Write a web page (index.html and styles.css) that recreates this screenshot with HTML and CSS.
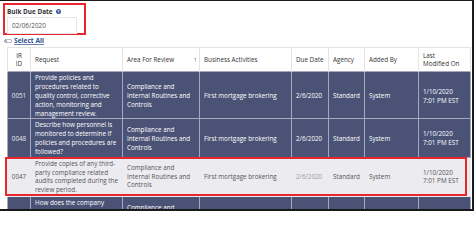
FILE: index.html
```html
<!DOCTYPE html>
<html>
<head>
<meta charset="utf-8">
<link rel="stylesheet" href="styles.css">
</head>
<body>
<div class="frame">
  <div class="bulk">
    <div class="bulk-label">Bulk Due Date
      <svg class="help" viewBox="0 0 10 10" width="5" height="5"><circle cx="5" cy="5" r="5" fill="#3d5a94"/><text x="5" y="8.2" font-size="8" font-weight="700" text-anchor="middle" fill="#fff" font-family="Open Sans, sans-serif">?</text></svg>
    </div>
    <div class="date-input">02/06/2020</div>
  </div>
  <div class="select-all">
    <svg class="toggle" viewBox="0 0 16 8" width="8" height="4"><rect x="0.75" y="0.75" width="14.5" height="6.5" rx="3.25" fill="none" stroke="#7a8aa8" stroke-width="1.3"/><circle cx="4" cy="4" r="1.8" fill="#7a8aa8"/></svg>
    <span class="select-link">Select All</span>
  </div>
  <div class="table-wrap">
    <table class="grid">
      <colgroup>
        <col class="c-id"><col class="c-req"><col class="c-area"><col class="c-biz"><col class="c-due"><col class="c-agency"><col class="c-added"><col class="c-mod">
      </colgroup>
      <thead>
        <tr>
          <th class="center">IR<br>ID</th>
          <th>Request</th>
          <th><div class="sort-head"><span>Area For Review</span><span class="sort">&#8593;</span></div></th>
          <th>Business Activities</th>
          <th>Due Date</th>
          <th>Agency</th>
          <th>Added By</th>
          <th>Last<br>Modified On</th>
        </tr>
      </thead>
      <tbody>
        <tr class="dark">
          <td class="center">0051</td>
          <td>Provide policies and procedures related to quality control, corrective action, monitoring and management review.</td>
          <td>Compliance and Internal Routines and Controls</td>
          <td>First mortgage brokering</td>
          <td>2/6/2020</td>
          <td>Standard</td>
          <td>System</td>
          <td>1/10/2020<br>7:01 PM EST</td>
        </tr>
        <tr class="dark roomy">
          <td class="center">0048</td>
          <td>Describe how personnel is monitored to determine if policies and procedures are followed?</td>
          <td>Compliance and Internal Routines and Controls</td>
          <td>First mortgage brokering</td>
          <td>2/6/2020</td>
          <td>Standard</td>
          <td>System</td>
          <td>1/10/2020<br>7:01 PM EST</td>
        </tr>
        <tr class="light">
          <td class="center">0047</td>
          <td>Provide copies of any third-party compliance related audits completed during the review period.</td>
          <td>Compliance and Internal Routines and Controls</td>
          <td>First mortgage brokering</td>
          <td class="muted">2/6/2020</td>
          <td>Standard</td>
          <td>System</td>
          <td>1/10/2020<br>7:01 PM EST</td>
        </tr>
        <tr class="dark">
          <td class="center">0046</td>
          <td>How does the company ensure compliance with applicable laws and regulations?</td>
          <td>Compliance and Internal Routines and Controls</td>
          <td>First mortgage brokering</td>
          <td>2/6/2020</td>
          <td>Standard</td>
          <td>System</td>
          <td>1/10/2020<br>7:01 PM EST</td>
        </tr>
      </tbody>
    </table>
    <div class="highlight-box"></div>
  </div>
</div>
</body>
</html>
```
FILE: styles.css
```css
html, body {
  margin: 0;
  padding: 0;
  background: #fff;
}
body {
  font-family: "Open Sans", "Liberation Sans", sans-serif;
  color: #333;
}
.frame {
  width: 472px;
  height: 208px;
  border-top: 1px solid #1a1a1a;
  border-right: 2px solid #1a1a1a;
  border-bottom: 2px solid #1a1a1a;
  overflow: hidden;
  background: #fff;
}
.bulk {
  margin: 2px 0 0 3px;
  width: 79px;
  height: 28px;
  border: 2px solid #e8262d;
  padding: 0;
}
.bulk-label {
  font-size: 6.4px;
  font-weight: 700;
  color: #333;
  margin: 3px 0 0 2px;
  line-height: 7px;
  display: flex;
  align-items: center;
  gap: 3px;
}
.help {
  display: block;
}
.date-input {
  margin: 2px 0 0 2px;
  width: 64px;
  height: 15px;
  border: 1px solid #e6e6e6;
  font-size: 6.4px;
  line-height: 15px;
  padding-left: 4px;
  color: #555;
}
.select-all {
  display: flex;
  align-items: center;
  gap: 2px;
  margin: 1px 0 0 4px;
  height: 9px;
}
.toggle {
  display: block;
}
.select-link {
  font-size: 6.6px;
  font-weight: 700;
  color: #2c4f8c;
  text-decoration: underline;
  text-decoration-color: #6b82b0;
  line-height: 9px;
}
.table-wrap {
  position: relative;
  margin: 2px 0 0 7px;
}
.grid {
  border-collapse: collapse;
  table-layout: fixed;
  width: 463px;
  font-size: 6.3px;
}
.c-id { width: 23px; }
.c-req { width: 92px; }
.c-area { width: 77px; }
.c-biz { width: 92px; }
.c-due { width: 37px; }
.c-agency { width: 36px; }
.c-added { width: 54px; }
.c-mod { width: 52px; }
.grid th {
  font-weight: 400;
  text-align: left;
  color: #333;
  height: 23px;
  padding: 0 4px;
  line-height: 8px;
  border-top: 1px solid #e4e4e4;
  border-left: 1px solid #e4e4e4;
  border-right: 1px solid #e4e4e4;
  vertical-align: middle;
}
.grid th.center, .grid td.center {
  text-align: center;
  padding-left: 2px;
  padding-right: 2px;
}
.sort-head {
  display: flex;
  justify-content: space-between;
  align-items: center;
}
.sort {
  font-size: 7px;
  font-weight: 700;
  color: #444;
  margin-right: -2px;
}
.grid td {
  padding: 1px 4px 0;
  line-height: 9px;
  vertical-align: middle;
}
.grid .roomy td {
  padding-bottom: 1px;
}
.dark td {
  background: #4a5276;
  color: #fff;
  border: 1px solid #a3a8bc;
}
.dark td.center {
  color: #e8e9ef;
}
.grid .light td {
  background: #ececf0;
  color: #555;
  border: 1px solid #ececf0;
  line-height: 8.6px;
  padding-top: 2px;
  padding-bottom: 2px;
}
.light td.muted {
  color: #9a9aa6;
}
.highlight-box {
  position: absolute;
  left: -2px;
  top: 110px;
  width: 458px;
  height: 35px;
  border: 2px solid #e8262d;
  pointer-events: none;
}
```
